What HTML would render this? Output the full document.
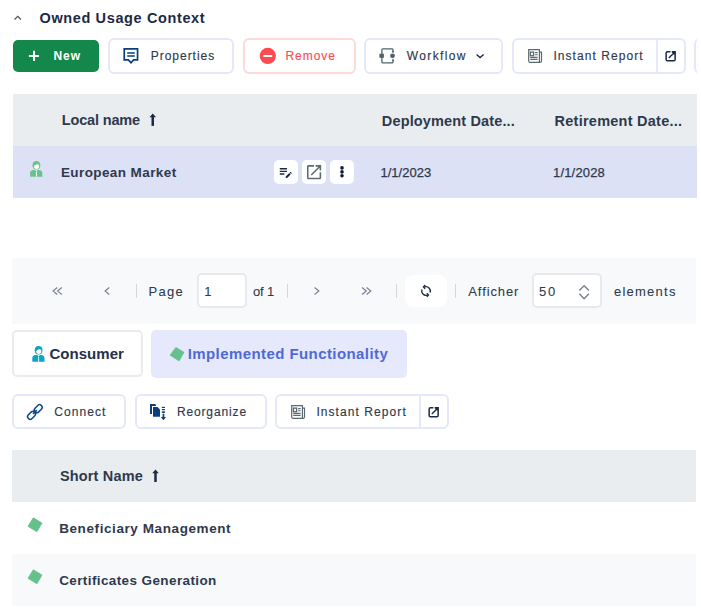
<!DOCTYPE html>
<html><head><meta charset="utf-8"><style>
html,body{margin:0;padding:0;background:#fff;width:701px;height:610px;overflow:hidden;position:relative;font-family:"Liberation Sans",sans-serif;}
.t{position:absolute;white-space:pre;}
.b{position:absolute;box-sizing:border-box;}
svg{position:absolute;overflow:visible;}
</style></head><body>
<!-- row1 buttons -->
<div class="b" style="left:13px;top:40px;width:86px;height:32px;background:#14874a;border-radius:5px"></div>
<div class="b" style="left:108px;top:38px;width:126px;height:36px;border:2px solid #e5e8fa;border-radius:6px"></div>
<div class="b" style="left:243px;top:38px;width:113px;height:36px;border:2px solid #ffd9d9;border-radius:6px"></div>
<div class="b" style="left:364px;top:38px;width:139px;height:36px;border:2px solid #e5e8fa;border-radius:6px"></div>
<div class="b" style="left:512px;top:38px;width:174px;height:36px;border:2px solid #e5e8fa;border-radius:6px"></div>
<div class="b" style="left:656px;top:39px;width:2px;height:34px;background:#e5e8fa"></div>
<div class="b" style="left:694px;top:38px;width:3px;height:36px;overflow:hidden"><div class="b" style="left:0;top:0;width:30px;height:36px;border:2px solid #e5e8fa;border-radius:6px"></div></div>
<!-- table1 -->
<div class="b" style="left:13px;top:94px;width:684px;height:52px;background:#e9edf0"></div>
<div class="b" style="left:13px;top:146px;width:684px;height:52px;background:#dde1f6"></div>
<div class="b" style="left:274px;top:160px;width:24px;height:24px;background:#fff;border-radius:5px"></div>
<div class="b" style="left:302px;top:160px;width:24px;height:24px;background:#fff;border-radius:5px"></div>
<div class="b" style="left:330px;top:160px;width:24px;height:24px;background:#fff;border-radius:5px"></div>
<!-- pagination -->
<div class="b" style="left:12px;top:258px;width:684px;height:66px;background:#f8f9fb"></div>
<div class="b" style="left:197px;top:273px;width:50px;height:35px;background:#fff;border:2px solid #e8e9ec;border-radius:5px"></div>
<div class="b" style="left:405px;top:275px;width:42px;height:32px;background:#fff;border-radius:8px"></div>
<div class="b" style="left:532px;top:273px;width:70px;height:35px;background:#fff;border:2px solid #e8e9ec;border-radius:5px"></div>
<div class="b" style="left:136px;top:284px;width:1px;height:14px;background:#d3d6db"></div>
<div class="b" style="left:287px;top:284px;width:1px;height:14px;background:#d3d6db"></div>
<div class="b" style="left:396px;top:284px;width:1px;height:14px;background:#d3d6db"></div>
<div class="b" style="left:455px;top:284px;width:1px;height:14px;background:#d3d6db"></div>
<!-- tabs -->
<div class="b" style="left:12px;top:330px;width:131px;height:47px;border:2px solid #ebebec;border-radius:5px"></div>
<div class="b" style="left:151px;top:330px;width:256px;height:48px;background:#e6e9fb;border-radius:5px"></div>
<!-- row2 buttons -->
<div class="b" style="left:12px;top:394px;width:114px;height:35px;border:2px solid #e5e8fa;border-radius:6px"></div>
<div class="b" style="left:135px;top:394px;width:132px;height:35px;border:2px solid #e5e8fa;border-radius:6px"></div>
<div class="b" style="left:275px;top:394px;width:174px;height:35px;border:2px solid #e5e8fa;border-radius:6px"></div>
<div class="b" style="left:419px;top:395px;width:2px;height:33px;background:#e5e8fa"></div>
<!-- table2 -->
<div class="b" style="left:12px;top:450px;width:684px;height:52px;background:#e9edf0"></div>
<div class="b" style="left:12px;top:554px;width:684px;height:52px;background:#f8f9fb"></div>

<svg style="left:0;top:0" width="701" height="610" viewBox="0 0 701 610">
<defs>
 <g id="person">
  <ellipse cx="6.3" cy="4.25" rx="3.9" ry="4.25"/>
  <path d="M0 15.8 V12.2 C0 10.3 1.3 9.3 3.2 9.1 L4.9 9 L6.3 10.6 L7.7 9 L9.2 9.1 C10.9 9.3 12.2 10.3 12.2 12.2 V15.8 Z"/>
 </g>
 <g id="personface"><path d="M3.9 5.6 C3.9 4.6 5.5 3.6 7.5 3.3 C8.3 3.6 9 4 9 4.6 V5.6 C9 7 7.9 8.1 6.45 8.1 C5 8.1 3.9 7 3.9 5.6 Z" fill="#fff"/><rect x="5.9" y="10.6" width="0.9" height="5.2" fill="#fff"/></g>
 <g id="report">
  <path d="M0.6 0.6 H11.3 V13.2 H1.8 C1.1 13.2 0.6 12.7 0.6 12 Z M11.3 3 H13.4 V12 C13.4 12.7 12.9 13.2 12.2 13.2 H11.3" fill="none" stroke-width="1.2"/>
  <rect x="2.3" y="3" width="3.2" height="3.6" fill="none" stroke-width="1.3"/>
  <path d="M7 3.5 H9.5 M7 5.7 H9.5 M2.1 8.3 H9.5 M2.1 10.3 H9.5" stroke-width="1.1"/>
 </g>
 <g id="ext" fill="none">
  <path d="M5 0.75 H2.05 Q0.75 0.75 0.75 2.05 V8.45 Q0.75 9.75 2.05 9.75 H8.45 Q9.75 9.75 9.75 8.45 V0.75 H6.3" stroke-width="1.5"/>
  <path d="M3.4 7.1 L9 1.5" stroke-width="1.4"/>
  <path d="M6.9 1.5 H9 V3.6" stroke-width="1.5"/>
 </g>
</defs>
<!-- header chevron -->
<path d="M14.6 19.5 L17.8 16.4 L21 19.5" fill="none" stroke="#444c5e" stroke-width="1.15"/>
<!-- plus -->
<path d="M28.9 56 H39 M34 50.8 V61.1" stroke="#fff" stroke-width="2"/>
<!-- properties bubble -->
<g stroke="#0b3d7a" fill="none">
 <path d="M124.25 48.95 H137.55 V59.95 H133.6 L131 62.8 L128.4 59.95 H124.25 Z" stroke-width="1.7" stroke-linejoin="miter"/>
 <path d="M127.2 52.9 H134.8 M127.2 56 H134.8" stroke-width="1.5"/>
</g>
<!-- remove -->
<circle cx="267.8" cy="55.9" r="8.1" fill="#fd4b51"/>
<rect x="263.4" y="55" width="8.8" height="2" fill="#fff"/>
<!-- workflow -->
<g fill="#4f626b" stroke="#4f626b">
 <path d="M393 52.4 V49.8 Q393 48.9 392.1 48.9 H382.8 Q381.9 48.9 381.9 49.8 V62 Q381.9 62.9 382.8 62.9 H392.1 Q393 62.9 393 62 V59.4" fill="none" stroke-width="1.3"/>
 <path d="M392.3 51 L393 52.4 L393.7 51 M392.3 60.8 L393 59.4 L393.7 60.8" fill="none" stroke-width="0.9"/>
 <rect x="379.4" y="53.8" width="4.5" height="4" stroke="none"/>
 <circle cx="392.5" cy="55.8" r="2.4" stroke="none"/>
</g>
<path d="M476.6 54.4 L480.1 57.6 L483.6 54.4" fill="none" stroke="#1d2a45" stroke-width="1.3"/>
<!-- report 1 -->
<use href="#report" x="528.1" y="49.1" stroke="#5a6870"/>
<use href="#ext" x="665.4" y="51" stroke="#1d2a45"/>
<!-- table row icons -->
<use href="#person" x="30.1" y="160.9" fill="#6cc28e"/>
<use href="#personface" x="30.1" y="160.9"/>
<path transform="translate(277.8,164.1) scale(0.66)" fill="#1d2a45" d="M3 10h11v2H3v-2zm0-2h11V6H3v2zm0 8h7v-2H3v2zm15.01-3.13l.71-.71c.39-.39 1.02-.39 1.41 0l.71.71c.39.39.39 1.02 0 1.41l-.71.71-2.12-2.12zm-.71.71l-5.3 5.3V21h2.12l5.3-5.3-2.12-2.12z"/>
<path transform="translate(304.6,162.7) scale(0.789)" fill="#5b6b73" d="M19 19H5V5h7V3H5c-1.11 0-2 .9-2 2v14c0 1.1.89 2 2 2h14c1.1 0 2-.9 2-2v-7h-2v7zM14 3v2h3.59l-9.83 9.83 1.41 1.41L19 6.41V10h2V3h-7z"/>
<g fill="#0d1b35"><circle cx="342" cy="167.9" r="1.8"/><circle cx="342" cy="171.9" r="1.8"/><circle cx="342" cy="175.8" r="1.8"/></g>
<!-- pagination chevrons -->
<g stroke="#7a8290" fill="none" stroke-width="1.2">
 <path d="M57.3 287.5 L53.1 291 L57.3 294.5 M61.8 287.5 L57.6 291 L61.8 294.5"/>
 <path d="M109.3 287.5 L105.1 291 L109.3 294.5"/>
 <path d="M314.6 287.5 L318.8 291 L314.6 294.5"/>
 <path d="M362.1 287.5 L366.3 291 L362.1 294.5 M366.6 287.5 L370.8 291 L366.6 294.5"/>
</g>
<!-- refresh -->
<g stroke="#1d2a45" fill="none" stroke-width="1.4">
 <path d="M424.5 286.96 A4.3 4.3 0 0 1 430.04 292.47"/>
 <path d="M425.2 285.1 L423.5 286.9 L425.2 288.7"/>
 <path d="M421.96 289.53 A4.3 4.3 0 0 0 427.47 295.04"/>
 <path d="M426.8 293.2 L428.5 295 L426.8 296.8"/>
</g>
<!-- select chevrons -->
<path d="M579.3 290.6 L584.1 285.8 L588.9 290.6 M579.3 293.8 L584.1 298.8 L588.9 293.8" fill="none" stroke="#7b818c" stroke-width="1.4"/>
<!-- tabs icons -->
<use href="#person" x="32.3" y="346" fill="#0ea5c0"/>
<use href="#personface" x="32.3" y="346"/>
<path d="M175.9 347.4 L184 352.3 L179.1 360.9 L170.1 355.2 Z" fill="#66c08c" stroke="#66c08c" stroke-width="0.8" stroke-linejoin="round"/>
<!-- connect -->
<g transform="translate(34.9,412) rotate(-45)" fill="none" stroke="#0c4a8a" stroke-width="1.5">
 <rect x="-9.2" y="-2.6" width="9" height="5.2" rx="2.6"/>
 <rect x="0.2" y="-2.6" width="9" height="5.2" rx="2.6"/>
 <path d="M-2.6 0 H2.6" stroke-width="1.7"/>
</g>
<!-- reorganize -->
<g fill="#0a3f7f">
 <path d="M150 404 H155 L156 405 V406 H152 V414 H150 Z"/>
 <path d="M153 407 H157.5 L160 409.5 V416.8 H153 Z"/>
 <rect x="161.9" y="406.8" width="3" height="1.2"/>
 <rect x="161.9" y="409" width="3" height="1.2"/>
 <rect x="161.9" y="411.3" width="3" height="1.6"/>
 <rect x="162.6" y="413.8" width="1.7" height="3.4"/>
 <path d="M160.9 417 H166 L163.45 420.2 Z"/>
</g>
<!-- report 2 -->
<use href="#report" x="291.1" y="405.1" stroke="#5a6870"/>
<use href="#ext" x="428.4" y="407" stroke="#1d2a45"/>
<!-- sort arrows -->
<g fill="#1d2a45">
 <rect x="151.5" y="116" width="2.5" height="9.9"/>
 <path d="M149.5 117.3 L152.75 113.5 L156 117.3 Z"/>
 <rect x="154.25" y="472" width="2.5" height="10"/>
 <path d="M152.2 473.3 L155.5 469.4 L158.8 473.3 Z"/>
</g>
<!-- diamonds -->
<path d="M33.3 517.8 L42 523.1 L36.9 531.8 L28 526.3 Z" fill="#66c08c" stroke="#66c08c" stroke-width="0.8" stroke-linejoin="round"/>
<path d="M33.3 569.8 L42 575.1 L36.9 583.8 L28 578.3 Z" fill="#66c08c" stroke="#66c08c" stroke-width="0.8" stroke-linejoin="round"/>
</svg>

<div class="t" style="left:39.50px;top:9.68px;font-size:14.5px;line-height:17px;font-weight:700;color:#1d2a45;letter-spacing:0.625px;">Owned Usage Context</div>
<div class="t" style="left:53.40px;top:49.34px;font-size:12px;line-height:14px;font-weight:700;color:#ffffff;letter-spacing:1.030px;">New</div>
<div class="t" style="left:150.80px;top:49.14px;font-size:12px;line-height:14px;font-weight:400;color:#2f394c;letter-spacing:0.968px;-webkit-text-stroke:0.15px #2f394c;">Properties</div>
<div class="t" style="left:285.50px;top:49.14px;font-size:12px;line-height:14px;font-weight:400;color:#fb4d55;letter-spacing:0.938px;-webkit-text-stroke:0.15px #fb4d55;">Remove</div>
<div class="t" style="left:406.80px;top:49.14px;font-size:12px;line-height:14px;font-weight:400;color:#2f394c;letter-spacing:1.350px;-webkit-text-stroke:0.15px #2f394c;">Workflow</div>
<div class="t" style="left:553.40px;top:49.14px;font-size:12px;line-height:14px;font-weight:400;color:#2f394c;letter-spacing:1.066px;-webkit-text-stroke:0.15px #2f394c;">Instant Report</div>
<div class="t" style="left:61.80px;top:112.28px;font-size:14.5px;line-height:17px;font-weight:700;color:#2f394c;letter-spacing:-0.168px;">Local name</div>
<div class="t" style="left:381.80px;top:112.78px;font-size:14.5px;line-height:17px;font-weight:700;color:#2f394c;letter-spacing:0.147px;">Deployment Date...</div>
<div class="t" style="left:554.60px;top:112.78px;font-size:14.5px;line-height:17px;font-weight:700;color:#2f394c;letter-spacing:0.244px;">Retirement Date...</div>
<div class="t" style="left:60.90px;top:165.32px;font-size:13.5px;line-height:16px;font-weight:700;color:#2f394c;letter-spacing:0.412px;">European Market</div>
<div class="t" style="left:380.40px;top:164.70px;font-size:13px;line-height:16px;font-weight:400;color:#2f394c;letter-spacing:0.032px;-webkit-text-stroke:0.15px #2f394c;-webkit-text-stroke:0.25px #2f394c;">1/1/2023</div>
<div class="t" style="left:553.00px;top:164.70px;font-size:13px;line-height:16px;font-weight:400;color:#2f394c;letter-spacing:0.175px;-webkit-text-stroke:0.15px #2f394c;-webkit-text-stroke:0.25px #2f394c;">1/1/2028</div>
<div class="t" style="left:148.50px;top:284.20px;font-size:13px;line-height:16px;font-weight:400;color:#2f394c;letter-spacing:1.256px;-webkit-text-stroke:0.15px #2f394c;-webkit-text-stroke:0.08px #2f394c;">Page</div>
<div class="t" style="left:204.20px;top:284.20px;font-size:13px;line-height:16px;font-weight:400;color:#2f394c;letter-spacing:0.000px;-webkit-text-stroke:0.15px #2f394c;-webkit-text-stroke:0.08px #2f394c;">1</div>
<div class="t" style="left:253.00px;top:284.20px;font-size:13px;line-height:16px;font-weight:400;color:#2f394c;letter-spacing:-0.151px;-webkit-text-stroke:0.15px #2f394c;-webkit-text-stroke:0.08px #2f394c;">of 1</div>
<div class="t" style="left:468.30px;top:284.20px;font-size:13px;line-height:16px;font-weight:400;color:#2f394c;letter-spacing:0.899px;-webkit-text-stroke:0.15px #2f394c;-webkit-text-stroke:0.08px #2f394c;">Afficher</div>
<div class="t" style="left:539.00px;top:284.20px;font-size:13px;line-height:16px;font-weight:400;color:#2f394c;letter-spacing:1.670px;-webkit-text-stroke:0.15px #2f394c;-webkit-text-stroke:0.08px #2f394c;">50</div>
<div class="t" style="left:614.00px;top:284.20px;font-size:13px;line-height:16px;font-weight:400;color:#2f394c;letter-spacing:1.236px;-webkit-text-stroke:0.15px #2f394c;-webkit-text-stroke:0.08px #2f394c;">elements</div>
<div class="t" style="left:49.40px;top:344.60px;font-size:15px;line-height:18px;font-weight:700;color:#24314a;letter-spacing:0.051px;">Consumer</div>
<div class="t" style="left:187.70px;top:344.60px;font-size:15px;line-height:18px;font-weight:700;color:#4e69d6;letter-spacing:0.418px;">Implemented Functionality</div>
<div class="t" style="left:54.30px;top:405.14px;font-size:12px;line-height:14px;font-weight:400;color:#2f394c;letter-spacing:1.056px;-webkit-text-stroke:0.15px #2f394c;">Connect</div>
<div class="t" style="left:176.90px;top:405.14px;font-size:12px;line-height:14px;font-weight:400;color:#2f394c;letter-spacing:0.867px;-webkit-text-stroke:0.15px #2f394c;">Reorganize</div>
<div class="t" style="left:316.40px;top:405.14px;font-size:12px;line-height:14px;font-weight:400;color:#2f394c;letter-spacing:1.074px;-webkit-text-stroke:0.15px #2f394c;">Instant Report</div>
<div class="t" style="left:59.90px;top:468.48px;font-size:14.5px;line-height:17px;font-weight:700;color:#2f394c;letter-spacing:0.165px;">Short Name</div>
<div class="t" style="left:59.20px;top:521.32px;font-size:13.5px;line-height:16px;font-weight:700;color:#2f394c;letter-spacing:0.588px;">Beneficiary Management</div>
<div class="t" style="left:59.20px;top:573.32px;font-size:13.5px;line-height:16px;font-weight:700;color:#2f394c;letter-spacing:0.391px;">Certificates Generation</div>
</body></html>
